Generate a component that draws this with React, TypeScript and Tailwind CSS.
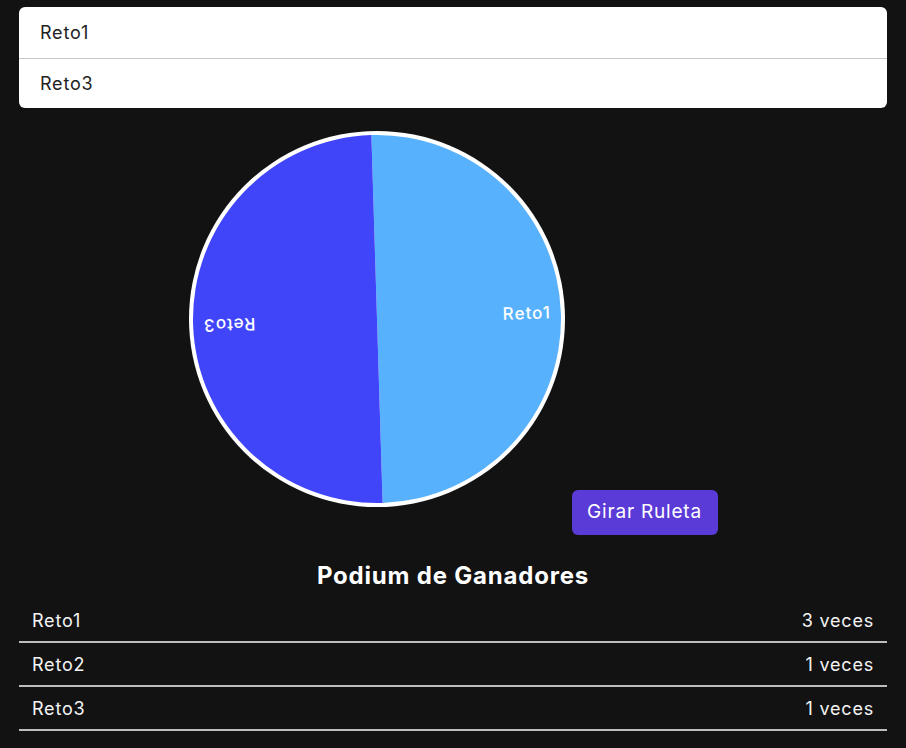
import React from "react";

const retos = ["Reto1", "Reto3"];

const podium = [
    { name: "Reto1", count: 3 },
    { name: "Reto2", count: 1 },
    { name: "Reto3", count: 1 },
];

const font = "font-['Inter','Liberation_Sans',sans-serif] tracking-[0.05em]";

// two-slice wheel, slightly turned from its last spin
const Wheel = () => {
    const size = 376;
    const c = size / 2;
    const r = 184;
    const label = (txt: string) => (
        <text
            x={c + 174}
            y={c}
            textAnchor="end"
            dominantBaseline="middle"
            fill="#ffffff"
            fontSize="17"
            fontWeight="500"
            letterSpacing="0.06em"
            fontFamily="Inter, 'Liberation Sans', sans-serif"
        >
            {txt}
        </text>
    );
    return (
        <svg width={size} height={size} viewBox={`0 0 ${size} ${size}`} className="block">
            <circle cx={c} cy={c} r={c} fill="#ffffff" />
            <g transform={`rotate(-1.75 ${c} ${c})`}>
                <path d={`M${c} ${c} L${c} ${c - r} A${r} ${r} 0 0 1 ${c} ${c + r} Z`} fill="#58b1fc" />
                <path d={`M${c} ${c} L${c} ${c + r} A${r} ${r} 0 0 1 ${c} ${c - r} Z`} fill="#4045fa" />
                {label("Reto1")}
                <g transform={`rotate(180 ${c} ${c})`}>{label("Reto3")}</g>
            </g>
        </svg>
    );
};

const App = () => {
    return (
        <div className={`min-h-screen bg-[#121212] px-[19px] pt-[7px] pb-4 ${font}`}>
            <ul className="bg-white rounded-md overflow-hidden">
                {retos.map((reto, i) => (
                    <li
                        key={reto}
                        className={`flex items-center px-[21px] text-[18px] text-[#222] ${i > 0 ? "h-[50px] border-t border-[#c8c8c8]" : "h-[51px]"}`}
                    >
                        {reto}
                    </li>
                ))}
            </ul>

            <div className="flex justify-center items-end gap-[7px] mt-[23px]">
                <div className="pb-[28px]">
                    <Wheel />
                </div>
                <button className="h-[45px] w-[146px] rounded-md bg-[#5b3bd8] text-white text-[19px]">
                    Girar Ruleta
                </button>
            </div>

            <h2 className="mt-[25px] text-center text-white text-[24px] font-bold leading-[32px]">
                Podium de Ganadores
            </h2>

            <ul className="mt-[7px]">
                {podium.map((p) => (
                    <li
                        key={p.name}
                        className="h-[44px] flex items-center justify-between px-[13px] text-[18px] text-[#f4f4f4] border-b-2 border-[#bdbdbd]"
                    >
                        <span>{p.name}</span>
                        <span>{p.count} veces</span>
                    </li>
                ))}
            </ul>
        </div>
    );
};

export default App;
